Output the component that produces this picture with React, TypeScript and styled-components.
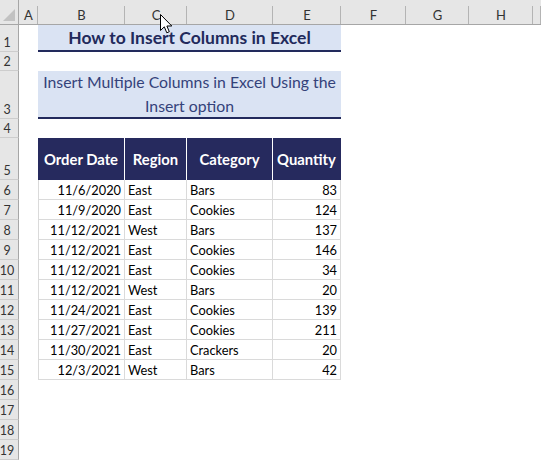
import { Fragment } from 'react';
import styled, { createGlobalStyle } from 'styled-components';

const GlobalStyle = createGlobalStyle`
  html, body {
    margin: 0;
    padding: 0;
    background: #fff;
    overflow: hidden;
  }
  body {
    font-family: Lato, "Liberation Sans", sans-serif;
  }
`;

const NAVY = '#262a5e';
const HEAD_BG = '#e6e6e6';
const HEAD_LINE = '#a6a6a6';
const CELL_LINE = '#dadada';

// the last column (I) is cut off by the window edge, so its letter is not shown
const COLUMNS = ['A', 'B', 'C', 'D', 'E', 'F', 'G', 'H', ''];
// sheet rows 1..19
const ROW_HEIGHTS = [27, 19, 48, 19, 42, ...Array(14).fill(20)];

interface IOrder {
  date: string;
  region: string;
  category: string;
  quantity: number;
}

const orders: IOrder[] = [
  { date: '11/6/2020', region: 'East', category: 'Bars', quantity: 83 },
  { date: '11/9/2020', region: 'East', category: 'Cookies', quantity: 124 },
  { date: '11/12/2021', region: 'West', category: 'Bars', quantity: 137 },
  { date: '11/12/2021', region: 'East', category: 'Cookies', quantity: 146 },
  { date: '11/12/2021', region: 'East', category: 'Cookies', quantity: 34 },
  { date: '11/12/2021', region: 'West', category: 'Bars', quantity: 20 },
  { date: '11/24/2021', region: 'East', category: 'Cookies', quantity: 139 },
  { date: '11/27/2021', region: 'East', category: 'Cookies', quantity: 211 },
  { date: '11/30/2021', region: 'East', category: 'Crackers', quantity: 20 },
  { date: '12/3/2021', region: 'West', category: 'Bars', quantity: 42 },
];

const Sheet = styled.div`
  position: relative;
  display: grid;
  grid-template-columns: 19px 19px 87px 62px 86px 68px 65px 63px 64px 1fr;
  grid-template-rows: 25px ${ROW_HEIGHTS.map(h => `${h}px`).join(' ')};
  width: 541px;
  height: 460px;
  overflow: hidden;
  background: #fff;
`;

const Corner = styled.div`
  position: relative;
  grid-row: 1;
  grid-column: 1;
  background: ${HEAD_BG};
  border-right: 1px solid ${HEAD_LINE};
  border-bottom: 1px solid ${HEAD_LINE};
  &::after {
    content: '';
    position: absolute;
    right: 3px;
    bottom: 3px;
    width: 12px;
    height: 12px;
    background: #c2c2c2;
    clip-path: polygon(100% 0, 100% 100%, 0 100%);
  }
`;

const ColHeader = styled.div<{ $col: number }>`
  grid-row: 1;
  grid-column: ${p => p.$col};
  display: flex;
  align-items: center;
  justify-content: center;
  padding-top: 6px;
  background: ${HEAD_BG} linear-gradient(#b4b4b4, #b4b4b4) no-repeat right bottom / 1px 18px;
  border-bottom: 1px solid ${HEAD_LINE};
  font-size: 13px;
  color: #333;
`;

const RowHeader = styled.div<{ $row: number }>`
  grid-column: 1;
  grid-row: ${p => p.$row + 1};
  display: flex;
  align-items: flex-end;
  justify-content: center;
  padding: 0 4px 0 0;
  background: ${HEAD_BG};
  border-right: 1px solid ${HEAD_LINE};
  border-bottom: 1px solid #cdcdcd;
  font-size: 12.5px;
  line-height: 16px;
  color: #333;
`;

const Banner = styled.div<{ $row: number; $bold?: boolean }>`
  grid-row: ${p => p.$row + 1};
  grid-column: 3 / span 4;
  display: flex;
  align-items: center;
  justify-content: center;
  padding: 0 3px;
  background: #dae3f3;
  border-bottom: 2px solid #222a5c;
  text-align: center;
  font-size: ${p => (p.$bold ? '17.5px' : '15.8px')};
  line-height: 24px;
  font-weight: ${p => (p.$bold ? 700 : 400)};
  color: ${p => (p.$bold ? '#222a5c' : '#34427a')};
  white-space: ${p => (p.$bold ? 'nowrap' : 'normal')};
`;

const HeadCell = styled.div<{ $col: number; $last?: boolean }>`
  grid-row: 6;
  grid-column: ${p => p.$col};
  display: flex;
  align-items: center;
  justify-content: center;
  background: ${NAVY};
  border-right: 1px solid ${p => (p.$last ? NAVY : '#fff')};
  color: #fff;
  font-weight: 700;
  font-size: 14.8px;
  white-space: nowrap;
`;

const Cell = styled.div<{ $row: number; $col: number; $right?: boolean }>`
  grid-row: ${p => p.$row + 1};
  grid-column: ${p => p.$col};
  display: flex;
  align-items: flex-end;
  justify-content: ${p => (p.$right ? 'flex-end' : 'flex-start')};
  padding: 0 3px;
  border-right: 1px solid ${CELL_LINE};
  border-bottom: 1px solid ${CELL_LINE};
  border-left: ${p => (p.$col === 3 ? `1px solid ${CELL_LINE}` : 'none')};
  font-size: 12.8px;
  line-height: 17px;
  color: #000;
  white-space: nowrap;
`;

const Pointer = styled.svg`
  position: absolute;
  left: 160px;
  top: 14px;
  width: 13px;
  height: 20px;
`;

const App = () => {
  return (
    <>
      <GlobalStyle />
      <Sheet>
        <Corner />
        {COLUMNS.map((letter, i) => (
          <ColHeader key={i} $col={i + 2}>{letter}</ColHeader>
        ))}
        {ROW_HEIGHTS.map((_, i) => (
          <RowHeader key={i} $row={i + 1}>{i + 1}</RowHeader>
        ))}

        <Banner $row={1} $bold>How to Insert Columns in Excel</Banner>
        <Banner $row={3}>Insert Multiple Columns in Excel Using the Insert option</Banner>

        <HeadCell $col={3}>Order Date</HeadCell>
        <HeadCell $col={4}>Region</HeadCell>
        <HeadCell $col={5}>Category</HeadCell>
        <HeadCell $col={6} $last>Quantity</HeadCell>

        {orders.map((o, i) => (
          <Fragment key={i}>
            <Cell $row={i + 6} $col={3} $right>{o.date}</Cell>
            <Cell $row={i + 6} $col={4}>{o.region}</Cell>
            <Cell $row={i + 6} $col={5}>{o.category}</Cell>
            <Cell $row={i + 6} $col={6} $right>{o.quantity}</Cell>
          </Fragment>
        ))}

        <Pointer viewBox="0 0 13 20">
          <path
            d="M0.5 0.5 L0.5 16.5 L4.3 12.8 L6.8 18.8 L9.3 17.7 L6.9 12 L11.8 12 Z"
            fill="#fff"
            stroke="#000"
            strokeWidth="1"
            strokeLinejoin="miter"
          />
        </Pointer>
      </Sheet>
    </>
  );
};

export default App;
